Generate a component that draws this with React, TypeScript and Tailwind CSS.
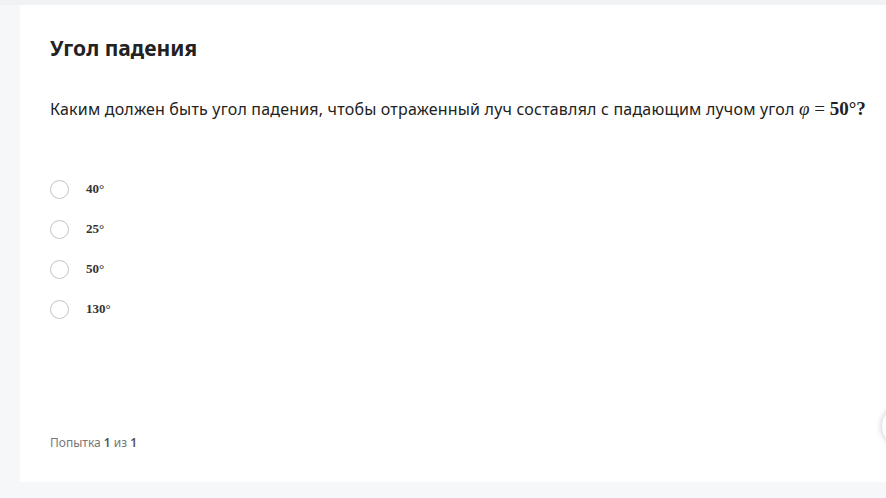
const OPTIONS = ["40°", "25°", "50°", "130°"];

export default function App() {
  return (
    <div className="relative h-[498px] w-[886px] overflow-hidden bg-[#f6f7f9] font-['Noto_Sans',sans-serif]">
      <div className="h-[5px] bg-[#f1f2f4]" />
      <div className="ml-5 flex h-[477px] flex-col bg-white px-[30px] pt-[30px] pb-[30px]">
        <h1 className="text-[21px] font-bold leading-[26px] text-[#222]">Угол падения</h1>
        <p className="mt-[37px] whitespace-nowrap text-[16px] leading-[22px] tracking-[0.012em] text-[#222]">
          Каким должен быть угол падения, чтобы отраженный луч составлял с падающим лучом угол{" "}
          <span className="font-['Liberation_Serif',serif] text-[19px] tracking-normal">
            <i>φ</i> = <b>50°</b>
          </span>
          <b className="font-['Liberation_Serif',serif] text-[19px]">?</b>
        </p>
        <div className="mt-[59px] flex flex-col gap-5">
          {OPTIONS.map((o) => (
            <label key={o} className="flex h-5 items-center gap-[17px]">
              <span className="h-[19px] w-[19px] rounded-full border border-[#c4c4c4] bg-white" />
              <span className="font-['Liberation_Serif',serif] text-[13px] font-bold text-[#333]">{o}</span>
            </label>
          ))}
        </div>
        <div className="mt-auto text-[12px] text-[#777]">
          Попытка <span className="font-semibold text-[#555]">1</span> из <span className="font-semibold text-[#555]">1</span>
        </div>
      </div>
      <div className="absolute left-[882px] top-[406px] h-10 w-10 rounded-full bg-white shadow-[0_0_6px_rgba(0,0,0,0.25)]" />
    </div>
  );
}
